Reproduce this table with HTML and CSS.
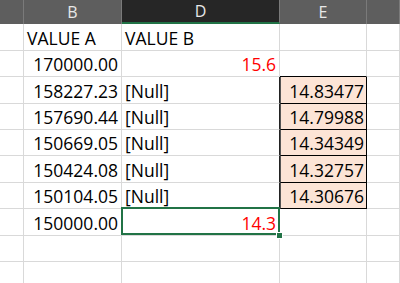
FILE: index.html
```html
<!DOCTYPE html>
<html lang="en">
<head>
  <meta charset="UTF-8">
  <title>Sheet</title>
  <link rel="stylesheet" href="styles.css">
</head>
<body>
  <div class="sheet">
    <!-- column headers -->
    <div class="hd"></div>
    <div class="hd">B</div>
    <div class="hd active">D</div>
    <div class="hd">E</div>
    <div class="hd"></div>

    <!-- row 1 -->
    <div class="cell"></div>
    <div class="cell">VALUE A</div>
    <div class="cell">VALUE B</div>
    <div class="cell"></div>
    <div class="cell"></div>

    <!-- row 2 -->
    <div class="cell"></div>
    <div class="cell num">170000.00</div>
    <div class="cell num red">15.6</div>
    <div class="cell above-box"></div>
    <div class="cell"></div>

    <!-- rows 3-7 -->
    <div class="cell"></div>
    <div class="cell num">158227.23</div>
    <div class="cell edge">[Null]</div>
    <div class="cell num box">14.83477</div>
    <div class="cell"></div>

    <div class="cell"></div>
    <div class="cell num">157690.44</div>
    <div class="cell edge">[Null]</div>
    <div class="cell num box">14.79988</div>
    <div class="cell"></div>

    <div class="cell"></div>
    <div class="cell num">150669.05</div>
    <div class="cell edge">[Null]</div>
    <div class="cell num box">14.34349</div>
    <div class="cell"></div>

    <div class="cell"></div>
    <div class="cell num">150424.08</div>
    <div class="cell edge">[Null]</div>
    <div class="cell num box">14.32757</div>
    <div class="cell"></div>

    <div class="cell"></div>
    <div class="cell num">150104.05</div>
    <div class="cell edge">[Null]</div>
    <div class="cell num box">14.30676</div>
    <div class="cell"></div>

    <!-- row 8 -->
    <div class="cell"></div>
    <div class="cell num">150000.00</div>
    <div class="cell num red selected">14.3</div>
    <div class="cell"></div>
    <div class="cell"></div>

    <!-- rows 9-10 -->
    <div class="cell"></div>
    <div class="cell"></div>
    <div class="cell"></div>
    <div class="cell"></div>
    <div class="cell"></div>

    <div class="cell"></div>
    <div class="cell"></div>
    <div class="cell"></div>
    <div class="cell"></div>
    <div class="cell"></div>
  </div>
</body>
</html>
```

FILE: styles.css
```css
/* Spreadsheet grid */
body {
  margin: 0;
  padding: 0;
  background-color: #fff;
  font-family: 'Open Sans', 'Liberation Sans', sans-serif;
  color: #000;
  overflow: hidden;
}

.sheet {
  display: grid;
  grid-template-columns: 24px 98px 158px 87px 1fr;
  grid-template-rows: 24px 27px 26px 27px 26px 26px 27px 26px 27px 26px 27px;
  width: 400px;
}

.hd {
  box-sizing: border-box;
  background-color: #5e5e5e;
  color: #e8e8e8;
  font-size: 16px;
  display: flex;
  align-items: center;
  justify-content: center;
  border-right: 1px solid #7a7a7a;
}

.hd.active {
  background-color: #262626;
  border-bottom: 2px solid #217346;
}

.cell {
  box-sizing: border-box;
  border-right: 1px solid #d9d9d9;
  border-bottom: 1px solid #d9d9d9;
  font-size: 17.5px;
  line-height: 20px;
  padding: 0 3px 2px 3px;
  display: flex;
  align-items: flex-end;
  white-space: nowrap;
}

.num {
  justify-content: flex-end;
}

.red {
  color: #ff0000;
}

.above-box {
  border-bottom-color: #000;
}

.edge {
  border-right-color: #222;
}

.box {
  background-color: #fce4d6;
  border-left: 1px solid #555;
  border-right-color: #000;
  border-bottom-color: #000;
  padding-right: 2px;
}

.selected {
  position: relative;
}

.selected::after {
  content: "";
  position: absolute;
  top: -2px;
  left: -1px;
  right: -1px;
  bottom: 0;
  border: 2px solid #217346;
}

.selected::before {
  content: "";
  position: absolute;
  right: -4px;
  bottom: -4px;
  width: 5px;
  height: 5px;
  background-color: #217346;
  border: 1px solid #fff;
  z-index: 1;
}
```
